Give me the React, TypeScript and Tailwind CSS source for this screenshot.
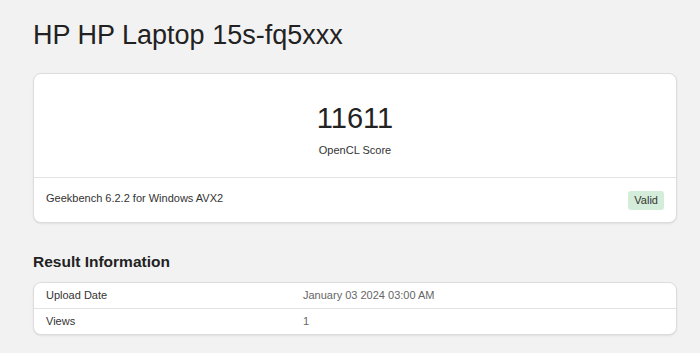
export default function App() {
  return (
    <div className="min-h-screen bg-[#f2f2f2] font-['Liberation_Sans',Arial,sans-serif] text-[#222]">
      <div className="pl-[33px] pr-[23px] pt-[19px]">
        <h1 className="text-[27px] leading-[32px] font-normal text-[#222]">HP HP Laptop 15s-fq5xxx</h1>

        <div className="mt-[22px] bg-white border border-[#dcdcdc] rounded-[8px] shadow-[0_1px_2px_rgba(0,0,0,0.08)]">
          <div className="flex flex-col items-center pt-[24px] pb-[19px]">
            <div className="text-[29px] leading-[40px] text-[#222]">11611</div>
            <div className="mt-[4px] text-[11px] leading-[16px] text-[#333]">OpenCL Score</div>
          </div>
          <div className="flex items-start justify-between border-t border-[#e3e3e3] px-[12px] pt-[12px] pb-[12px]">
            <span className="text-[11px] leading-[16px] text-[#333]">Geekbench 6.2.2 for Windows AVX2</span>
            <span className="mt-[1px] bg-[#d4edda] text-[#333] text-[11px] leading-[15px] px-[6px] py-[2px] rounded-[3px]">Valid</span>
          </div>
        </div>

        <h2 className="mt-[29px] text-[15.5px] leading-[20px] font-bold text-[#222]">Result Information</h2>

        <div className="mt-[10px] bg-white border border-[#dcdcdc] rounded-[8px] shadow-[0_1px_2px_rgba(0,0,0,0.08)] text-[11px] leading-[17px]">
          <div className="flex py-[4px] border-b border-[#e3e3e3]">
            <span className="w-[269px] pl-[12px] text-[#333]">Upload Date</span>
            <span className="text-[#666]">January 03 2024 03:00 AM</span>
          </div>
          <div className="flex py-[4px]">
            <span className="w-[269px] pl-[12px] text-[#333]">Views</span>
            <span className="text-[#666]">1</span>
          </div>
        </div>
      </div>
    </div>
  );
}
